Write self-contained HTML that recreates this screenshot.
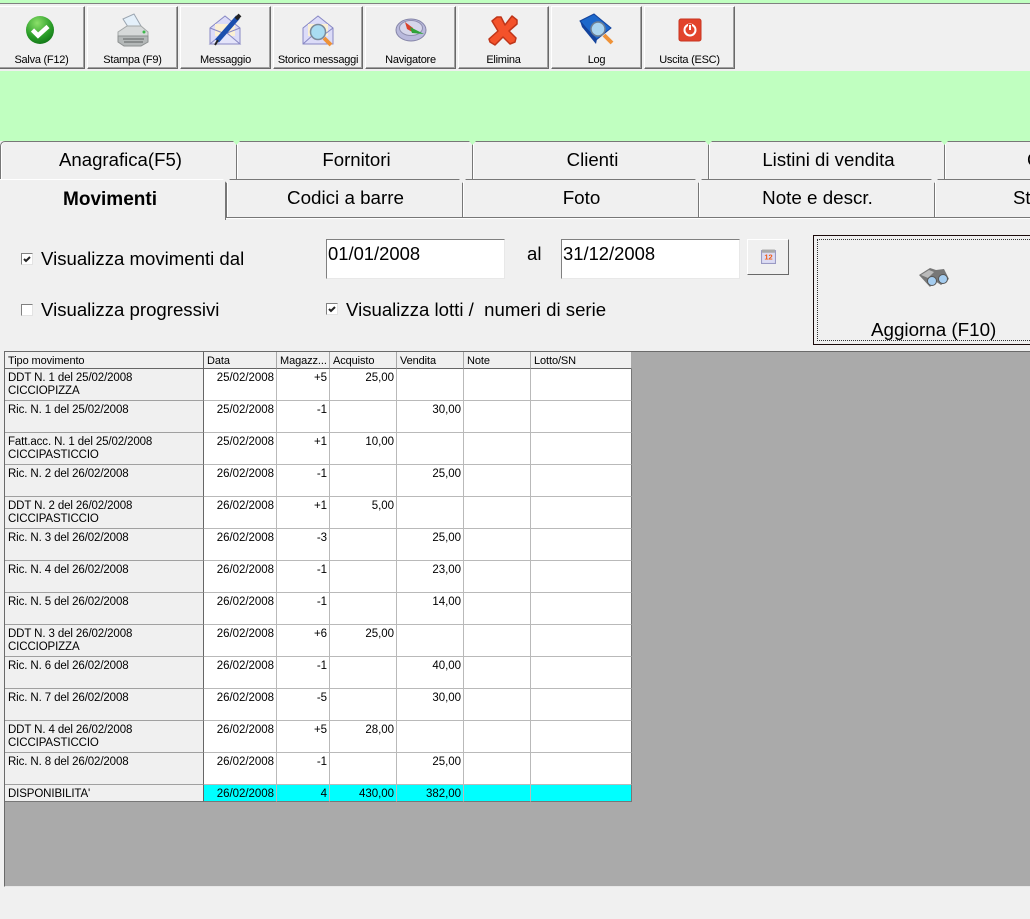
<!DOCTYPE html>
<html><head><meta charset="utf-8"><title>Movimenti</title>
<style>
html,body{margin:0;padding:0}
body{width:1030px;height:919px;overflow:hidden;position:relative;background:#f0f0f0;font-family:"Liberation Sans",sans-serif;color:#000}
div,span,svg,table{position:absolute;box-sizing:border-box}
td,td span{position:static}
.top{left:0;top:0;width:1030px;height:3px;background:#c0ffc0}
.topl{left:0;top:3px;width:1030px;height:1px;background:#808080}
.green{left:0;top:71px;width:1030px;height:70px;background:#c0ffc0}
.btn{top:6px;height:63px;background:#f0f0f0;border:1px solid;border-color:#fff #696969 #696969 #fff;box-shadow:inset -1px -1px 0 #a0a0a0}
.btn span{left:-2px;right:-2px;top:46px;text-align:center;font-size:11px;line-height:14px;letter-spacing:-.25px;white-space:nowrap}
.btn svg{left:50%;top:5px;margin-left:-18px;width:36px;height:36px}
.tab{height:39px;background:#f0f0f0;border:1px solid #777;text-align:center;font-size:18.6px;line-height:36px;white-space:nowrap;overflow:hidden;box-shadow:inset 1px 0 0 #fff}
.r1{padding-left:4px}
.r2{padding-left:2px;font-size:18.8px}
.n{width:7px;height:4px;background:#c0ffc0;clip-path:polygon(0 0,100% 0,50% 100%)}
.n2{background:#f0f0f0}
.lab{font-size:18.6px;line-height:22px;white-space:nowrap}
.cb{width:12px;height:12px;background:#fff;border:1px solid;border-color:#808080 #e3e3e3 #e3e3e3 #808080}
.inp{top:239px;height:40px;background:#fff;border:1px solid;border-color:#808080 #e8e8e8 #e8e8e8 #808080;font-size:18.4px;line-height:28px;padding-left:1px}
.grid{left:4px;top:351px;width:1026px;height:536px;background:#aaa;border-left:1px solid #6a6a6a;border-top:1px solid #6a6a6a;border-bottom:1px solid #e8e8e8}
table{left:0;top:0;border-collapse:separate;border-spacing:0;table-layout:fixed;width:627px;font-size:11.5px;line-height:13px;letter-spacing:-.03px;background:#fff}
td{padding:3px 2px 0 3px;height:32px;vertical-align:top;border-right:1px solid #b9b9b9;border-bottom:1px solid #b9b9b9;white-space:nowrap;overflow:hidden;text-align:right;box-sizing:border-box}
td:first-child{text-align:left;background:#f0f0f0;border-right:1px solid #666;border-bottom-color:#a0a0a0;letter-spacing:-.12px}
td:last-child{border-right:1px solid #777}
tr.h td{height:17px;background:#f0f0f0;text-align:left;border-bottom:1px solid #666;border-right-color:#a8a8a8;padding-top:3px;line-height:12px;font-size:11px;letter-spacing:-.1px}
tr.h td:first-child{border-right-color:#666}
tr.t td{height:17px;background:#0ff;border-bottom:1px solid #777;padding-top:3px}
tr.t td:first-child{background:#f0f0f0;border-bottom-color:#777}
</style></head><body>
<div class="top"></div><div class="topl"></div>

<div class="btn" style="left:-2px;width:87px"><span>Salva (F12)</span>
<svg viewBox="0 0 36 36" style="margin-left:-20px"><defs><radialGradient id="g" cx=".4" cy=".25" r=".85"><stop offset="0" stop-color="#8ce06a"/><stop offset=".6" stop-color="#2a9d28"/><stop offset="1" stop-color="#0c6d14"/></radialGradient></defs><circle cx="18" cy="18" r="14" fill="url(#g)"/><path d="M10.500 18l5.500 5.500 10-9" fill="none" stroke="#fff" stroke-width="4.500"/></svg></div>

<div class="btn" style="left:87px;width:91px"><span>Stampa (F9)</span>
<svg viewBox="0 0 36 36" style="margin-left:-18px"><path d="M8 7l11-5 7 12-11 4z" fill="#e4f0fa" stroke="#9aa5b0"/><path d="M3 20l9-6h14l7 6v5H3z" fill="#d6d9d9" stroke="#a3a7a7"/><path d="M3 24h30v6l-7 4H9l-6-4z" fill="#b4b8b8" stroke="#8b8f8f"/><path d="M8 27h21M9 30h19" stroke="#6f7373" stroke-width="1.200"/><circle cx="29" cy="20" r="1.500" fill="#3cb84a"/></svg></div>

<div class="btn" style="left:180px;width:91px"><span>Messaggio</span>
<svg viewBox="0 0 36 36" style="margin-left:-19px"><path d="M3 16L18 4l15 12v16H3z" fill="#dcdcf8" stroke="#8787c4"/><path d="M8 12h20v12H8z" fill="#fbf0d4"/><path d="M3 32l13-11h4l13 11zM3 16l13 5M33 16l-13 5" fill="#e4e4fa" stroke="#8787c4"/><path d="M10 29L31 5" stroke="#1c4fae" stroke-width="5"/><path d="M29 7l4-4" stroke="#222" stroke-width="4"/><path d="M8 33l3-5" stroke="#222" stroke-width="2"/></svg></div>

<div class="btn" style="left:273px;width:90px"><span>Storico messaggi</span>
<svg viewBox="0 0 36 36"><path d="M3 16L18 4l15 12v16H3z" fill="#dcdcf8" stroke="#8787c4"/><path d="M8 12h20v12H8z" fill="#fbf0d4"/><path d="M3 32l10-9M33 16l-8 6" fill="none" stroke="#8787c4"/><circle cx="18" cy="20" r="7.500" fill="#a9dcf2" stroke="#7a8a9a" stroke-width="1.500"/><path d="M24 26l7 7" stroke="#ef9237" stroke-width="4"/></svg></div>

<div class="btn" style="left:365px;width:91px"><span>Navigatore</span>
<svg viewBox="0 0 36 36"><ellipse cx="18" cy="18" rx="15" ry="11" fill="#b9b9dc" stroke="#8585a8"/><ellipse cx="18" cy="16" rx="11.500" ry="7.500" fill="#d6d6ea" stroke="#9090b0"/><path d="M12 10l8 6 1 5-7-4z" fill="#d9412b"/><path d="M17 15l14 7-12-1z" fill="#2fa33a"/></svg></div>

<div class="btn" style="left:458px;width:91px"><span>Elimina</span>
<svg viewBox="0 0 36 36" stroke-linejoin="round"><path d="M6 9l5-4 4 0 4 8 7-9 5 4 0 4-8 7 7 7-1 4-5 2-7-7-8 8-5-3-1-3 9-8z" fill="#f4522a" stroke="#bf3519" stroke-width="1.500"/></svg></div>

<div class="btn" style="left:551px;width:91px"><span>Log</span>
<svg viewBox="0 0 36 36" style="margin-left:-18px"><path d="M1 9l14-7 17 14-15 12z" fill="#1d68cb" stroke="#13439c"/><path d="M1 9l2 6 14 17 1-5z" fill="#13439c"/><circle cx="19" cy="17" r="7" fill="#a9d4ef" stroke="#6d7f94" stroke-width="1.500"/><path d="M25 23l8 8" stroke="#ef9237" stroke-width="4"/></svg></div>

<div class="btn" style="left:644px;width:91px"><span>Uscita (ESC)</span>
<svg viewBox="0 0 36 36"><rect x="7" y="7" width="22" height="22" rx="2" fill="#e2442c" stroke="#c8351f"/><circle cx="18" cy="18" r="5.500" fill="none" stroke="#fff" stroke-width="2"/><path d="M18 12v6" stroke="#e2442c" stroke-width="4"/><path d="M18 13v5" stroke="#fff" stroke-width="2"/></svg></div>

<div class="green"></div>

<div class="tab r1" style="left:0;top:141px;width:237px;border-top-left-radius:5px">Anagrafica(F5)</div>
<div class="tab r1" style="left:236px;top:141px;width:237px">Fornitori</div>
<div class="tab r1" style="left:472px;top:141px;width:237px">Clienti</div>
<div class="tab r1" style="left:708px;top:141px;width:237px">Listini di vendita</div>
<div class="tab" style="left:944px;top:141px;width:86px;border-right:0;text-align:left;padding-left:82px">Giacenze</div>
<div class="n" style="left:233px;top:141px"></div><div class="n" style="left:469px;top:141px"></div><div class="n" style="left:705px;top:141px"></div><div class="n" style="left:941px;top:141px"></div>

<div class="tab r2" style="left:226px;top:179px;width:237px">Codici a barre</div>
<div class="tab r2" style="left:462px;top:179px;width:237px">Foto</div>
<div class="tab r2" style="left:698px;top:179px;width:237px">Note e descr.</div>
<div class="tab" style="left:934px;top:179px;width:96px;border-right:0;text-align:left;padding-left:78px">Storico</div>
<div class="tab" style="left:0;top:179px;width:226px;height:41px;font-size:19px;line-height:39px;font-weight:bold;border-bottom:0;border-left:0;border-top-color:#fff;border-right-color:#777;padding-right:5px;box-shadow:none">Movimenti</div>
<div class="n n2" style="left:223px;top:179px"></div><div class="n n2" style="left:459px;top:179px"></div><div class="n n2" style="left:695px;top:179px"></div><div class="n n2" style="left:931px;top:179px"></div>
<div style="left:226px;top:218px;width:804px;height:1px;background:#fff"></div>

<div class="cb" style="left:21px;top:253px"><svg viewBox="0 0 10 10" style="left:0;top:0;width:10px;height:10px"><path d="M2 5l2 2 4-4" fill="none" stroke="#222" stroke-width="2"/></svg></div>
<div class="lab" style="left:41px;top:248px">Visualizza movimenti dal</div>
<div class="cb" style="left:21px;top:304px"></div>
<div class="lab" style="left:41px;top:299px">Visualizza progressivi</div>
<div class="inp" style="left:326px;width:179px">01/01/2008</div>
<div class="lab" style="left:527px;top:243px">al</div>
<div class="inp" style="left:561px;width:179px">31/12/2008</div>
<div style="left:747px;top:239px;width:42px;height:36px;background:#f0f0f0;border:1px solid;border-color:#fff #696969 #696969 #fff"><svg viewBox="0 0 14 14" style="left:13px;top:9px;width:15px;height:15px"><rect x="0.500" y="1.500" width="13" height="12" fill="#dcdcf4" stroke="#9a9ac4"/><rect x="1" y="0.500" width="12" height="3" fill="#aaa"/><text x="7" y="10" text-anchor="middle" font-size="7" font-weight="bold" fill="#f05a14" font-family="Liberation Sans">12</text></svg></div>
<div class="cb" style="left:326px;top:303px"><svg viewBox="0 0 10 10" style="left:0;top:0;width:10px;height:10px"><path d="M2 5l2 2 4-4" fill="none" stroke="#222" stroke-width="2"/></svg></div>
<div class="lab" style="left:346px;top:299px">Visualizza lotti /&nbsp; numeri di serie</div>

<div style="left:813px;top:235px;width:217px;height:110px;background:#f0f0f0;border:1px solid #1a0a0a;border-right:0">
<div style="left:3px;top:3px;right:0;bottom:3px;border:1px dotted #333;border-right:0"></div>
<svg viewBox="0 0 32 20" style="left:104px;top:31px;width:32px;height:20px"><path d="M1 8L12 1l6 2 8-1 5 10-8 6-6-4-5 6z" fill="#777"/><path d="M3 8l8-5 5 2-6 6z" fill="#bbb"/><circle cx="14" cy="14" r="4.500" fill="#a5cdf0" stroke="#555"/><circle cx="25" cy="12" r="4.500" fill="#a5cdf0" stroke="#555"/></svg>
<div style="left:57px;width:150px;top:83px;font-size:18.8px;line-height:22px;white-space:nowrap">Aggiorna (F10)</div></div>

<div class="grid">
<table><colgroup><col style="width:199px"><col style="width:73px"><col style="width:53px"><col style="width:67px"><col style="width:67px"><col style="width:67px"><col style="width:101px"></colgroup>
<tr class="h"><td>Tipo movimento</td><td>Data</td><td>Magazz...</td><td>Acquisto</td><td>Vendita</td><td>Note</td><td>Lotto/SN</td></tr>
<tr><td>DDT N. 1 del 25/02/2008<br>CICCIOPIZZA</td><td>25/02/2008</td><td>+5</td><td>25,00</td><td></td><td></td><td></td></tr>
<tr><td>Ric. N. 1 del 25/02/2008</td><td>25/02/2008</td><td>-1</td><td></td><td>30,00</td><td></td><td></td></tr>
<tr><td>Fatt.acc. N. 1 del 25/02/2008<br>CICCIPASTICCIO</td><td>25/02/2008</td><td>+1</td><td>10,00</td><td></td><td></td><td></td></tr>
<tr><td>Ric. N. 2 del 26/02/2008</td><td>26/02/2008</td><td>-1</td><td></td><td>25,00</td><td></td><td></td></tr>
<tr><td>DDT N. 2 del 26/02/2008<br>CICCIPASTICCIO</td><td>26/02/2008</td><td>+1</td><td>5,00</td><td></td><td></td><td></td></tr>
<tr><td>Ric. N. 3 del 26/02/2008</td><td>26/02/2008</td><td>-3</td><td></td><td>25,00</td><td></td><td></td></tr>
<tr><td>Ric. N. 4 del 26/02/2008</td><td>26/02/2008</td><td>-1</td><td></td><td>23,00</td><td></td><td></td></tr>
<tr><td>Ric. N. 5 del 26/02/2008</td><td>26/02/2008</td><td>-1</td><td></td><td>14,00</td><td></td><td></td></tr>
<tr><td>DDT N. 3 del 26/02/2008<br>CICCIOPIZZA</td><td>26/02/2008</td><td>+6</td><td>25,00</td><td></td><td></td><td></td></tr>
<tr><td>Ric. N. 6 del 26/02/2008</td><td>26/02/2008</td><td>-1</td><td></td><td>40,00</td><td></td><td></td></tr>
<tr><td>Ric. N. 7 del 26/02/2008</td><td>26/02/2008</td><td>-5</td><td></td><td>30,00</td><td></td><td></td></tr>
<tr><td>DDT N. 4 del 26/02/2008<br>CICCIPASTICCIO</td><td>26/02/2008</td><td>+5</td><td>28,00</td><td></td><td></td><td></td></tr>
<tr><td>Ric. N. 8 del 26/02/2008</td><td>26/02/2008</td><td>-1</td><td></td><td>25,00</td><td></td><td></td></tr>
<tr class="t"><td>DISPONIBILITA'</td><td>26/02/2008</td><td>4</td><td>430,00</td><td>382,00</td><td></td><td></td></tr>
</table></div>
</body></html>
